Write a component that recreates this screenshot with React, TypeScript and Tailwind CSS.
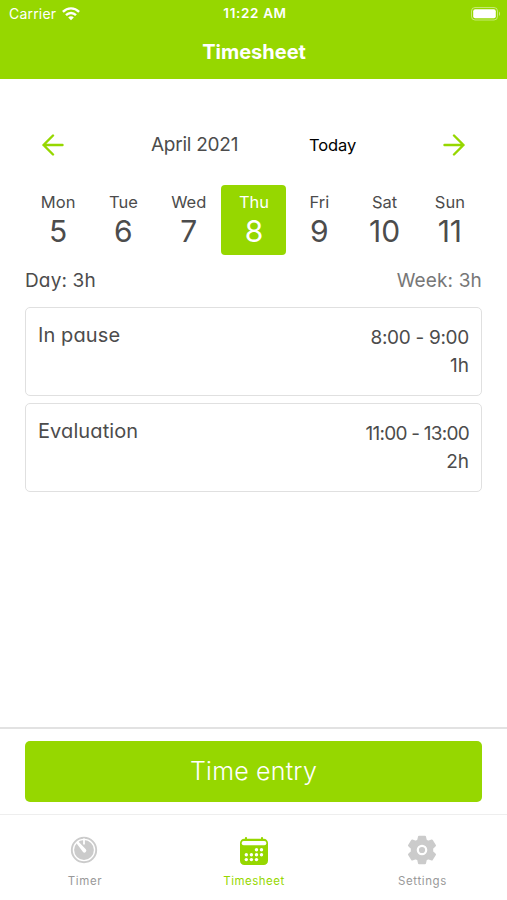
import React from "react";

interface Entry {
  name: string;
  time: string;
  timeClass: string;
  duration: string;
}

const days = [
  { label: "Mon", date: 5 },
  { label: "Tue", date: 6 },
  { label: "Wed", date: 7 },
  { label: "Thu", date: 8 },
  { label: "Fri", date: 9 },
  { label: "Sat", date: 10 },
  { label: "Sun", date: 11 },
];

const entries: Entry[] = [
  {
    name: "In pause",
    time: "8:00 - 9:00",
    timeClass: "tracking-[-0.3px]",
    duration: "1h",
  },
  {
    name: "Evaluation",
    time: "11:00 - 13:00",
    timeClass: "tracking-[-0.75px]",
    duration: "2h",
  },
];

const WifiIcon = () => (
  <svg width="18" height="14" viewBox="0 0 18 14" fill="none" stroke="white">
    <path d="M0.9 4.9C5.5 0.2 12.5 0.2 17.1 4.9" strokeWidth="2.4" />
    <path d="M4 8.1C6.9 5.2 11.1 5.2 14 8.1" strokeWidth="2.4" />
    <path d="M9 13.3L6.2 10.4C7.8 8.9 10.2 8.9 11.8 10.4Z" fill="white" stroke="none" />
  </svg>
);

const BatteryIcon = () => (
  <svg width="30" height="14" viewBox="0 0 30 14" fill="none">
    <rect x="0.5" y="0.5" width="26" height="12.5" rx="3.5" stroke="white" strokeOpacity="0.45" />
    <rect x="2.2" y="2.2" width="22.6" height="9.1" rx="2" fill="white" />
    <path d="M28 4.5C29.4 5.2 29.4 8.2 28 9Z" fill="white" fillOpacity="0.5" />
  </svg>
);

const ArrowIcon = ({ className }: { className?: string }) => (
  <svg
    width="22"
    height="22"
    viewBox="0 0 22 22"
    fill="none"
    stroke="#96d700"
    strokeWidth="2.4"
    strokeLinecap="round"
    strokeLinejoin="round"
    className={className}
  >
    <path d="M20.5 11H1.5M11 1.5L1.5 11L11 20.5" />
  </svg>
);

const TimerIcon = () => (
  <svg width="28" height="28" viewBox="0 0 28 28" fill="none">
    <circle cx="14" cy="14" r="12.2" stroke="#cbcbcb" strokeWidth="1.9" />
    <circle cx="14" cy="14" r="9.9" fill="#cbcbcb" />
    <path d="M14 2.5V8.5" stroke="white" strokeWidth="1.8" />
    <path d="M6.3 7L8.1 5.3L15.8 13.3A1.9 1.9 0 0 1 13 15.9Z" fill="white" />
  </svg>
);

const CalendarIcon = () => (
  <svg width="28" height="28" viewBox="0 0 28 28" fill="#96d700">
    <rect x="0" y="1.7" width="28" height="26.3" rx="4.3" />
    <rect x="5" y="0" width="2" height="4" rx="0.8" />
    <rect x="21" y="0" width="2" height="4" rx="0.8" />
    <rect x="1.7" y="4" width="24.6" height="4.3" rx="2" fill="white" />
    <g fill="white">
      <circle cx="16.5" cy="12.8" r="1.7" />
      <circle cx="21.5" cy="12.8" r="1.7" />
      <circle cx="6.3" cy="17.7" r="1.7" />
      <circle cx="11.4" cy="17.7" r="1.7" />
      <circle cx="16.5" cy="17.7" r="1.7" />
      <circle cx="21.5" cy="17.7" r="1.7" />
      <circle cx="6.3" cy="22.6" r="1.7" />
      <circle cx="11.4" cy="22.6" r="1.7" />
      <circle cx="16.5" cy="22.6" r="1.7" />
    </g>
  </svg>
);

const GearIcon = () => (
  <svg width="30" height="30" viewBox="0 0 30 30" fill="#cbcbcb">
    <path
      stroke="#cbcbcb"
      strokeWidth="2"
      strokeLinejoin="round"
      d="M12 1.8H18L18.8 5.3L21.3 6.8L24.9 5.4L28 10.6L25.2 13.2V16.8L28 19.4L24.9 24.6L21.3 23.2L18.8 24.7L18 28.2H12L11.2 24.7L8.7 23.2L5.1 24.6L2 19.4L4.8 16.8V13.2L2 10.6L5.1 5.4L8.7 6.8L11.2 5.3Z"
    />
    <circle cx="15" cy="15" r="4.2" fill="none" stroke="white" strokeWidth="2.2" />
  </svg>
);

const Header = () => (
  <header className="h-[79px] bg-[#96d700] text-white">
    <div className="grid h-[27px] grid-cols-3 items-center pl-[9px] pr-[6px]">
      <div className="flex items-center gap-[6px] text-[14px] tracking-[0.2px]">
        Carrier
        <WifiIcon />
      </div>
      <div className="text-center text-[13.5px] font-semibold tracking-[0.65px]">11:22 AM</div>
      <div className="flex justify-end">
        <BatteryIcon />
      </div>
    </div>
    <h1 className="pl-[1px] text-center text-[20px] font-bold leading-[51px]">Timesheet</h1>
  </header>
);

const EntryCard = ({ entry }: { entry: Entry }) => (
  <div className="flex h-[89px] justify-between rounded-[5px] border-[1.5px] border-[#e0e0e0] pl-[12px] pr-[12px] text-[19px] text-[#4c4c4c]">
    <p className="pt-[13px] text-[20px] leading-[28px] tracking-[0.1px]">{entry.name}</p>
    <div className="pt-[16px] text-right leading-[28px]">
      <p className={entry.timeClass}>{entry.time}</p>
      <p>{entry.duration}</p>
    </div>
  </div>
);

const App: React.FC = () => {
  const selected = 8;

  return (
    <div className="flex h-[900px] w-[507px] flex-col bg-white font-['Inter',sans-serif] [font-feature-settings:'calt'_0]">
      <Header />
      <main className="flex-1 px-[25px] pt-[46px]">
        <div className="flex h-10 items-center px-[17px]">
          <ArrowIcon />
          <span className="ml-[87px] w-[90px] whitespace-nowrap text-[19px] tracking-[-0.25px] text-[#4c4c4c] [font-feature-settings:'cv11']">
            April 2021
          </span>
          <span className="ml-[68px] text-[16.5px] tracking-[-0.1px] text-black">Today</span>
          <ArrowIcon className="ml-auto rotate-180" />
        </div>

        <div className="mt-[20px] grid grid-cols-7">
          {days.map((day) => (
            <div
              key={day.date}
              className={`flex h-[70px] flex-col items-center rounded-[4px] pl-[1px] pt-[7px] ${
                day.date === selected ? "bg-[#96d700] text-white" : "text-[#4c4c4c]"
              }`}
            >
              <span className="text-[16.5px] leading-5">{day.label}</span>
              <span className="text-[30px] leading-[38px]">{day.date}</span>
            </div>
          ))}
        </div>

        <section className="[font-feature-settings:'cv11']">
          <div className="flex h-[52px] items-center justify-between pt-[1px] text-[19px] tracking-[0.15px]">
            <span className="text-[#4c4c4c]">Day: 3h</span>
            <span className="text-[#777777]">Week: 3h</span>
          </div>
          <div className="flex flex-col gap-[7px]">
            {entries.map((entry) => (
              <EntryCard key={entry.name} entry={entry} />
            ))}
          </div>
        </section>
      </main>

      <div className="h-[87px] border-t-2 border-[#e2e2e2] px-[25px] pt-3">
        <button className="block h-[61px] w-full rounded-[5px] bg-[#96d700] pt-[1px] text-[25px] font-light tracking-[0.2px] text-white">
          Time entry
        </button>
      </div>

      <nav className="grid h-[86px] grid-cols-3 border-t border-[#eeeeee] text-[11.5px] tracking-[0.6px] text-[#999999]">
        <div className="flex flex-col items-center">
          <div className="flex h-[57px] items-end pb-[8px] pr-[1px]">
            <TimerIcon />
          </div>
          <span className="pl-[1px] leading-[18px]">Timer</span>
        </div>
        <div className="flex flex-col items-center text-[#96d700]">
          <div className="flex h-[57px] items-end pb-[7px]">
            <CalendarIcon />
          </div>
          <span className="pl-[1px] leading-[18px] tracking-[0.5px]">Timesheet</span>
        </div>
        <div className="flex flex-col items-center">
          <div className="flex h-[57px] items-end pb-[7px] pr-[2px]">
            <GearIcon />
          </div>
          <span className="leading-[18px]">Settings</span>
        </div>
      </nav>
    </div>
  );
};

export default App;
